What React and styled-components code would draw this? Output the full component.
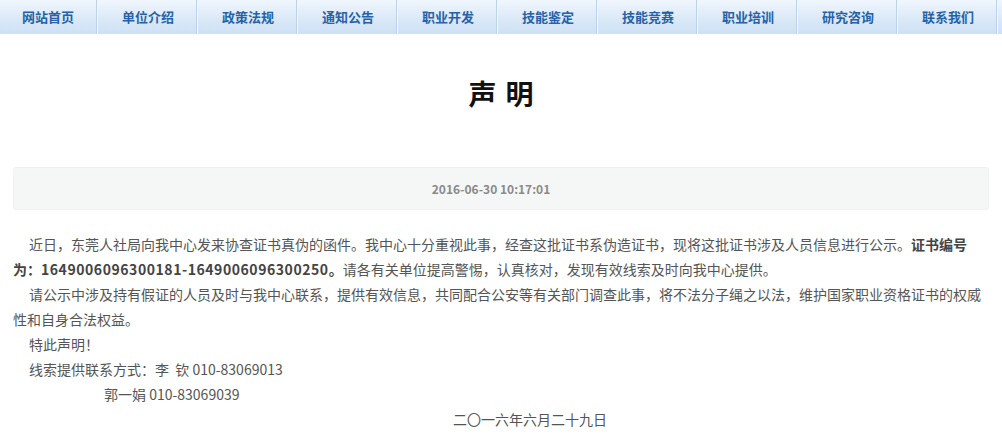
import styled, { createGlobalStyle } from "styled-components"

const GlobalStyle = createGlobalStyle`
    body {
        margin: 0;
        background: #fff;
        font-family: "Microsoft YaHei", "Noto Sans CJK SC", "Noto Sans", sans-serif;
    }
`

const Nav = styled.ul`
    display: flex;
    margin: 0;
    padding: 0;
    list-style: none;
    height: 34px;
    background: linear-gradient(to bottom, #f0f6fd 0%, #dbe9f8 55%, #cde1f5 100%);
`

const NavItem = styled.li`
    box-sizing: border-box;
    width: 97px;
    margin-right: 3px;
    border-right: 1px solid #bcd2ea;
    box-shadow: 1px 0 0 #f4f9fe;
    display: flex;
    align-items: center;
    justify-content: center;
    font-size: 13px;
    font-weight: bold;
    color: #2562a8;
    flex-shrink: 0;
    padding-bottom: 1px;
`

const Page = styled.div`
    padding: 0 13px;
`

const Title = styled.h1`
    margin: 0;
    padding-top: 42px;
    padding-left: 9px;
    height: 91px;
    box-sizing: border-box;
    text-align: center;
    font-size: 28px;
    font-weight: bold;
    color: #111;
    letter-spacing: 9px;
    line-height: 34px;
`

const Meta = styled.div`
    margin-top: 42px;
    height: 41px;
    padding-right: 20px;
    background: #f5f7f7;
    border: 1px solid #f0f2f2;
    border-radius: 3px;
    display: flex;
    align-items: center;
    justify-content: center;
    font-size: 12px;
    font-weight: bold;
    color: #8a8a8a;
`

const Content = styled.div`
    margin-top: 22px;
    font-size: 14px;
    line-height: 25px;
    color: #555;
`

const Para = styled.p`
    margin: 0;
    text-indent: ${p => p.$indent || 16}px;
`

const Strong = styled.b`
    color: #444;
`

const Code = styled.span`
    letter-spacing: 0.55px;
`

const DateLine = styled.p`
    margin: 0;
    padding-left: 440px;
`

const navs = ["网站首页", "单位介绍", "政策法规", "通知公告", "职业开发", "技能鉴定", "技能竞赛", "职业培训", "研究咨询", "联系我们"]

export default function App() {
    return (
        <>
            <GlobalStyle />
            <Nav>
                {navs.map(n => <NavItem key={n}>{n}</NavItem>)}
            </Nav>
            <Page>
                <Title>声明</Title>
                <Meta>2016-06-30 10:17:01</Meta>
                <Content>
                    <Para>
                        近日，东莞人社局向我中心发来协查证书真伪的函件。我中心十分重视此事，经查这批证书系伪造证书，现将这批证书涉及人员信息进行公示。<Strong>证书编号为：<Code>1649006096300181-1649006096300250</Code>。</Strong>请各有关单位提高警惕，认真核对，发现有效线索及时向我中心提供。
                    </Para>
                    <Para>
                        请公示中涉及持有假证的人员及时与我中心联系，提供有效信息，共同配合公安等有关部门调查此事，将不法分子绳之以法，维护国家职业资格证书的权威性和自身合法权益。
                    </Para>
                    <Para>特此声明！</Para>
                    <Para>线索提供联系方式：李&nbsp;&nbsp;钦 010-83069013</Para>
                    <Para $indent={91}>郭一娟 010-83069039</Para>
                    <DateLine>二〇一六年六月二十九日</DateLine>
                </Content>
            </Page>
        </>
    )
}
